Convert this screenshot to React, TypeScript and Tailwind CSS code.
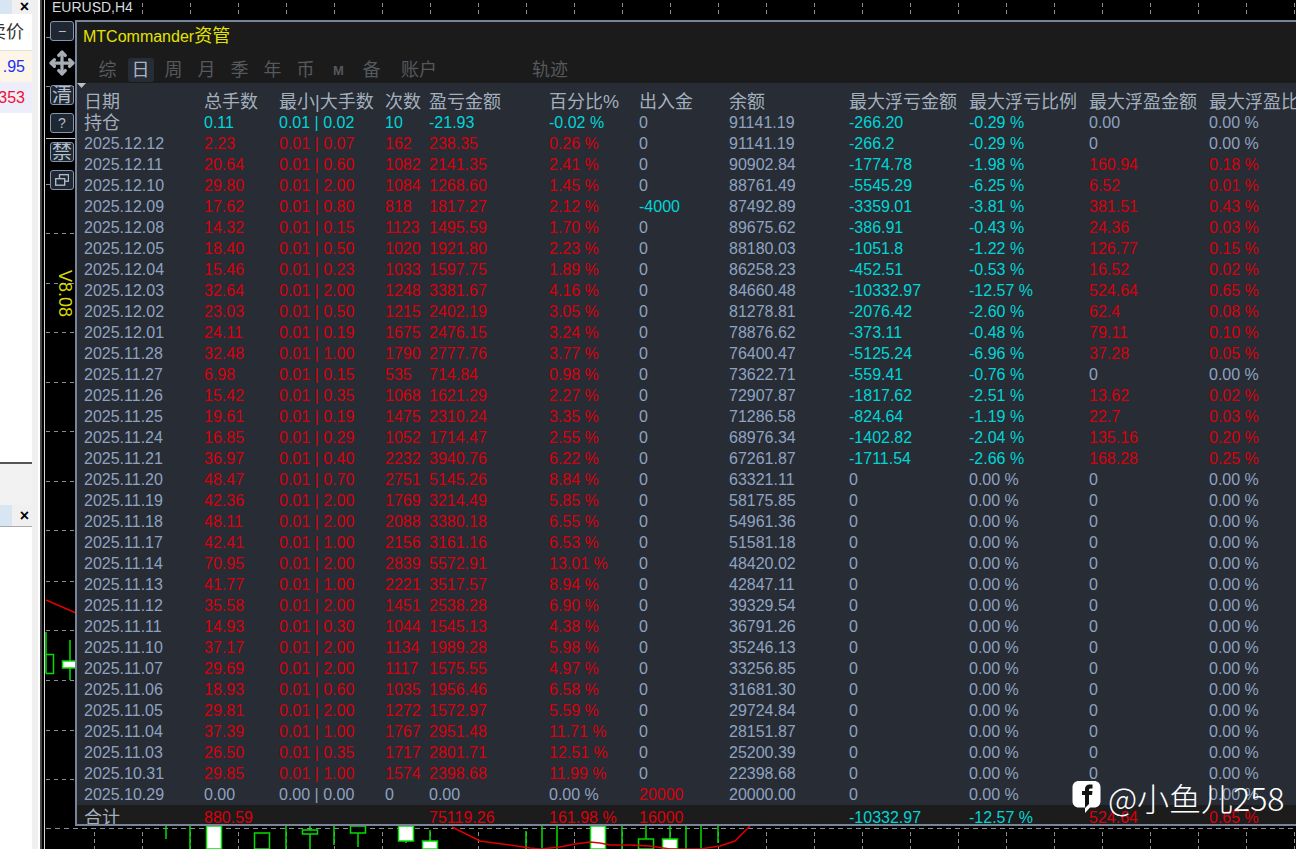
import { Move } from 'lucide-react';

const HEADERS = ['日期', '总手数', '最小|大手数', '次数', '盈亏金额', '百分比%', '出入金', '余额', '最大浮亏金额', '最大浮亏比例', '最大浮盈金额', '最大浮盈比例'];

const ROWS = [
  '2025.12.12,2.23,0.01 | 0.07,162,238.35,0.26 %,0,91141.19,-266.2,-0.29 %,0,0.00 %',
  '2025.12.11,20.64,0.01 | 0.60,1082,2141.35,2.41 %,0,90902.84,-1774.78,-1.98 %,160.94,0.18 %',
  '2025.12.10,29.80,0.01 | 2.00,1084,1268.60,1.45 %,0,88761.49,-5545.29,-6.25 %,6.52,0.01 %',
  '2025.12.09,17.62,0.01 | 0.80,818,1817.27,2.12 %,-4000,87492.89,-3359.01,-3.81 %,381.51,0.43 %',
  '2025.12.08,14.32,0.01 | 0.15,1123,1495.59,1.70 %,0,89675.62,-386.91,-0.43 %,24.36,0.03 %',
  '2025.12.05,18.40,0.01 | 0.50,1020,1921.80,2.23 %,0,88180.03,-1051.8,-1.22 %,126.77,0.15 %',
  '2025.12.04,15.46,0.01 | 0.23,1033,1597.75,1.89 %,0,86258.23,-452.51,-0.53 %,16.52,0.02 %',
  '2025.12.03,32.64,0.01 | 2.00,1248,3381.67,4.16 %,0,84660.48,-10332.97,-12.57 %,524.64,0.65 %',
  '2025.12.02,23.03,0.01 | 0.50,1215,2402.19,3.05 %,0,81278.81,-2076.42,-2.60 %,62.4,0.08 %',
  '2025.12.01,24.11,0.01 | 0.19,1675,2476.15,3.24 %,0,78876.62,-373.11,-0.48 %,79.11,0.10 %',
  '2025.11.28,32.48,0.01 | 1.00,1790,2777.76,3.77 %,0,76400.47,-5125.24,-6.96 %,37.28,0.05 %',
  '2025.11.27,6.98,0.01 | 0.15,535,714.84,0.98 %,0,73622.71,-559.41,-0.76 %,0,0.00 %',
  '2025.11.26,15.42,0.01 | 0.35,1068,1621.29,2.27 %,0,72907.87,-1817.62,-2.51 %,13.62,0.02 %',
  '2025.11.25,19.61,0.01 | 0.19,1475,2310.24,3.35 %,0,71286.58,-824.64,-1.19 %,22.7,0.03 %',
  '2025.11.24,16.85,0.01 | 0.29,1052,1714.47,2.55 %,0,68976.34,-1402.82,-2.04 %,135.16,0.20 %',
  '2025.11.21,36.97,0.01 | 0.40,2232,3940.76,6.22 %,0,67261.87,-1711.54,-2.66 %,168.28,0.25 %',
  '2025.11.20,48.47,0.01 | 0.70,2751,5145.26,8.84 %,0,63321.11,0,0.00 %,0,0.00 %',
  '2025.11.19,42.36,0.01 | 2.00,1769,3214.49,5.85 %,0,58175.85,0,0.00 %,0,0.00 %',
  '2025.11.18,48.11,0.01 | 2.00,2088,3380.18,6.55 %,0,54961.36,0,0.00 %,0,0.00 %',
  '2025.11.17,42.41,0.01 | 1.00,2156,3161.16,6.53 %,0,51581.18,0,0.00 %,0,0.00 %',
  '2025.11.14,70.95,0.01 | 2.00,2839,5572.91,13.01 %,0,48420.02,0,0.00 %,0,0.00 %',
  '2025.11.13,41.77,0.01 | 1.00,2221,3517.57,8.94 %,0,42847.11,0,0.00 %,0,0.00 %',
  '2025.11.12,35.58,0.01 | 2.00,1451,2538.28,6.90 %,0,39329.54,0,0.00 %,0,0.00 %',
  '2025.11.11,14.93,0.01 | 0.30,1044,1545.13,4.38 %,0,36791.26,0,0.00 %,0,0.00 %',
  '2025.11.10,37.17,0.01 | 2.00,1134,1989.28,5.98 %,0,35246.13,0,0.00 %,0,0.00 %',
  '2025.11.07,29.69,0.01 | 2.00,1117,1575.55,4.97 %,0,33256.85,0,0.00 %,0,0.00 %',
  '2025.11.06,18.93,0.01 | 0.60,1035,1956.46,6.58 %,0,31681.30,0,0.00 %,0,0.00 %',
  '2025.11.05,29.81,0.01 | 2.00,1272,1572.97,5.59 %,0,29724.84,0,0.00 %,0,0.00 %',
  '2025.11.04,37.39,0.01 | 1.00,1767,2951.48,11.71 %,0,28151.87,0,0.00 %,0,0.00 %',
  '2025.11.03,26.50,0.01 | 0.35,1717,2801.71,12.51 %,0,25200.39,0,0.00 %,0,0.00 %',
  '2025.10.31,29.85,0.01 | 1.00,1574,2398.68,11.99 %,0,22398.68,0,0.00 %,0,0.00 %',
  '2025.10.29,0.00,0.00 | 0.00,0,0.00,0.00 %,20000,20000.00,0,0.00 %,0,0.00 %',
].map((r) => r.split(','));

const HOLDING = ['持仓', '0.11', '0.01 | 0.02', '10', '-21.93', '-0.02 %', '0', '91141.19', '-266.20', '-0.29 %', '0.00', '0.00 %'];
const TOTAL = ['合计', '880.59', '', '', '75119.26', '161.98 %', '16000', '', '-10332.97', '-12.57 %', '524.64', '0.65 %'];

const TABS = ['综', '日', '周', '月', '季', '年', '币', 'M', '备'];

const RED = 'text-[#d8000c]';
const CYAN = 'text-[#00d5d5]';
const GRAY = 'text-[#8fa3c0]';

const gridClass = 'grid grid-cols-[120px_75px_106px_44px_120px_90px_90px_120px_120px_120px_120px_120px] items-center whitespace-nowrap pl-[7px]';
const rowClass = `${gridClass} h-[21px]`;

const cellColor = (value: string, col: number) => {
  if (col === 0 || col === 7) return GRAY;
  const n = parseFloat(value);
  if (n === 0) return GRAY;
  return n < 0 ? CYAN : RED;
};

// chart behind the panel: grid, candles and the moving average
const CANDLES = [
  { x: 166, top: 826, bottom: 839 },
  { x: 190, top: 826, bottom: 849 },
  { x: 214, top: 826, bottom: 849, box: [826, 849], fill: true },
  { x: 262, top: 833, bottom: 849, box: [833, 849] },
  { x: 286, top: 826, bottom: 849, box: [833, 833] },
  { x: 310, top: 826, bottom: 849, box: [830, 834] },
  { x: 334, top: 826, bottom: 845, box: [830, 830] },
  { x: 358, top: 826, bottom: 847, box: [826, 833] },
  { x: 406, top: 826, bottom: 843, box: [826, 841], fill: true },
  { x: 430, top: 830, bottom: 849, box: [841, 849], fill: true },
  { x: 526, top: 831, bottom: 849 },
  { x: 542, top: 826, bottom: 849 },
  { x: 557, top: 826, bottom: 849 },
  { x: 598, top: 826, bottom: 849, box: [826, 849], fill: true },
  { x: 622, top: 826, bottom: 849 },
  { x: 646, top: 826, bottom: 849, box: [839, 849] },
  { x: 670, top: 826, bottom: 849, box: [839, 849], fill: true },
  { x: 686, top: 826, bottom: 849 },
  { x: 701, top: 826, bottom: 849 },
  { x: 718, top: 826, bottom: 843 },
  { x: 70, top: 640, bottom: 680, box: [661, 668], fill: true },
];

function ChartCanvas() {
  const ticks = Array.from({ length: 26 }, (_, i) => 94 + i * 48);
  const levels = [37, 86, 184, 233, 283, 332, 382, 431, 481, 530, 581, 630, 680, 730, 779];
  return (
    <svg className="absolute left-0 top-0" width="1296" height="849" viewBox="0 0 1296 849" fill="none">
      {ticks.map((x) => (
        <g key={x} stroke="#8a8f96" strokeWidth="1" strokeDasharray="4 3">
          <path d={`M${x + 0.5} 3V16`} />
          <path d={`M${x + 0.5} 832V849`} />
        </g>
      ))}
      {levels.map((y) => (
        <path key={y} d={`M46 ${y + 0.5}H76`} stroke="#8a8f96" strokeDasharray="4 4" />
      ))}
      <path d="M46 828.5H1296" stroke="#8a8f96" strokeDasharray="5 4" />
      <path d="M46 138.5H76" stroke="#c8ccd2" />
      {CANDLES.map((c) => (
        <g key={c.x} stroke="#00e000" strokeWidth="1.5">
          <path d={`M${c.x} ${c.top}V${c.bottom}`} />
          {c.box && (
            <rect x={c.x - 7.5} y={c.box[0]} width="15" height={c.box[1] - c.box[0]} fill={c.fill ? '#ffffff' : '#000000'} />
          )}
        </g>
      ))}
      <path d="M46 632V673.500M46 654.500H53.500V673.500H46" stroke="#00e000" strokeWidth="1.500" />
      <path d="M46 600L76 613" stroke="#e00000" strokeWidth="1.5" />
      <path
        d="M452 827L480 841L495 843L510 845L530 848L540 849L560 847L575 844L590 842L600 843L610 845L630 845L650 846L670 849L700 849L720 846L735 841L750 826"
        stroke="#e00000"
        strokeWidth="1.5"
      />
    </svg>
  );
}

function SideButton({ children, className = '' }: { children: React.ReactNode; className?: string }) {
  return (
    <div className={`flex h-[20px] w-[24px] items-center justify-center overflow-hidden rounded-[3px] border border-[#8496ad] bg-[#1f2733] text-[#b4bfcc] ${className}`}>
      {children}
    </div>
  );
}

function SideTools() {
  return (
    <div className="absolute left-[50px] top-[21px] flex w-[24px] flex-col items-center">
      <SideButton className="text-[14px] leading-none">−</SideButton>
      <Move className="mb-[9px] mt-[9px] h-[26px] w-[26px] text-[#a8aeb5]" strokeWidth={3} />
      <SideButton className="text-[20px] leading-none">清</SideButton>
      <SideButton className="mt-[8px] text-[14px] leading-none">?</SideButton>
      <SideButton className="mt-[9px] text-[20px] leading-none">禁</SideButton>
      <SideButton className="mt-[8px]">
        <svg width="14" height="12" viewBox="0 0 14 12" fill="none" stroke="#b4bfcc" strokeWidth="1.3">
          <rect x="4.5" y="0.7" width="9" height="6.5" />
          <rect x="0.7" y="4.7" width="9" height="6.5" fill="#1f2733" />
        </svg>
      </SideButton>
      <div className="ml-[6px] mt-[80px] whitespace-nowrap text-[18px] leading-none text-[#d8d800] [writing-mode:vertical-rl]">V8.08</div>
    </div>
  );
}

function LeftDock() {
  return (
    <aside className="flex w-[38px] shrink-0 flex-col overflow-hidden border-r-[6px] border-[#f0f0f0] bg-white text-[16px]">
      <div className="flex h-[14px] items-center justify-end bg-[#f0f0f0] pr-[3px] text-[16px] font-bold leading-none">
        <span className="mr-auto h-full w-[12px] bg-[#d8e6f4]" />×
      </div>
      <div className="flex h-[37px] items-center justify-end border-b border-[#e0e0e0] pr-[8px] text-[18px] text-[#333]">
        <span className="whitespace-nowrap">卖价</span>
      </div>
      <div className="flex h-[31px] items-center justify-end bg-[#fdf5e8] pr-[7px] text-[#2030f0]">.95</div>
      <div className="flex h-[31px] items-center justify-end bg-[#eeeefa] pr-[7px] text-[#f01030]">353</div>
      <div className="h-[351px] border-b-2 border-[#555]" />
      <div className="h-[41px] bg-[#f2f2f2]" />
      <div className="flex h-[22px] items-center justify-end border-b border-[#aaa] bg-[#f0f0f0] pr-[3px]">
        <span className="mr-auto h-full w-[12px] bg-[#d8e6f4]" />
        <span className="text-[16px] font-bold leading-none">×</span>
      </div>
      <div className="flex-1" />
    </aside>
  );
}

function Panel() {
  return (
    <div className="absolute left-[75px] top-[20px] flex h-[806px] w-[1221px] flex-col overflow-hidden border-y-2 border-l-2 border-[#76859a] bg-[#272c35] text-[16px] leading-none">
      <header className="h-[61px] shrink-0 bg-[#1b1b1b] pl-[6px]">
        <div className="pt-[5px] text-[#e4e400]">
          MTCommander<span className="text-[18px]">资管</span>
        </div>
        <nav className="mt-[13px] flex h-[24px] items-center pl-[8px] text-[18px] text-[#55595e]">
          {TABS.map((t) => (
            <span
              key={t}
              className={`mx-[3.5px] flex h-[24px] w-[26px] items-center justify-center ${t === 'M' ? 'text-[13px] font-bold' : ''} ${t === '日' ? 'rounded-[3px] bg-[#272d36] text-[#aab4c0]' : ''}`}
            >
              {t}
            </span>
          ))}
          <span className="ml-[13px]">账户</span>
          <span className="ml-[95px]">轨迹</span>
        </nav>
      </header>
      <svg className="absolute left-0 top-[61px]" width="10" height="6" viewBox="0 0 10 6">
        <path d="M0 0H9L4.5 5Z" fill="#b9bfc6" />
      </svg>
      <div className="shrink-0 pt-[8px]">
        <div className={`${rowClass} text-[18px] text-[#a3afbd]`}>
          {HEADERS.map((h) => (
            <span key={h}>{h}</span>
          ))}
        </div>
        <div className={rowClass}>
          {HOLDING.map((v, i) => (
            <span key={i} className={i === 0 ? 'text-[18px] text-[#a3afbd]' : i < 4 ? CYAN : cellColor(v, i)}>
              {v}
            </span>
          ))}
        </div>
        {ROWS.map((row) => (
          <div key={row[0]} className={rowClass}>
            {row.map((v, i) => (
              <span key={i} className={cellColor(v, i)}>
                {v}
              </span>
            ))}
          </div>
        ))}
      </div>
      <div className={`${gridClass} h-[19px] shrink-0 bg-[#1c1c1c] pt-[4px]`}>
        {TOTAL.map((v, i) => (
          <span key={i} className={i === 0 ? 'text-[18px] text-[#a3afbd]' : cellColor(v, i)}>
            {v}
          </span>
        ))}
      </div>
    </div>
  );
}

function Watermark() {
  return (
    <div className="absolute left-[1072px] top-[780px] flex items-center gap-[7px] font-['Noto_Sans_CJK_SC',sans-serif] text-[32px] font-light leading-none text-white">
      <svg width="29" height="34" viewBox="0 0 29 34">
        <path
          d="M7 1H22C26 1 28.500 3.500 28.500 7.500V21C28.500 25 26 27.500 22 27.500H18L13 33V27.500H7C3 27.500 .5 25 .5 21V7.500C.5 3.500 3 1 7 1Z"
          fill="#ffffff"
        />
        <path d="M13 28V15H10V11H13V9C13 6 15 4.500 17.500 4.500H20.500V8.500H18.500C17.500 8.500 17 9 17 10V11H20.500L20 15H17V24Z" fill="#111111" />
      </svg>
      <span>@小鱼儿258</span>
    </div>
  );
}

export default function App() {
  return (
    <div className="relative flex h-[849px] w-[1296px] overflow-hidden bg-black font-['Liberation_Sans','Noto_Sans_CJK_SC',sans-serif]">
      <LeftDock />
      <div className="h-full w-[2px] shrink-0 bg-white" />
      <div className="h-full w-[2px] shrink-0 bg-[#444]" />
      <div className="h-full w-[2px] shrink-0 bg-black" />
      <div className="h-full w-px shrink-0 bg-[#d8d8d8]" />
      <ChartCanvas />
      <div className="absolute left-[52px] top-0 text-[14px] leading-[14px] text-[#d8dadd]">EURUSD,H4</div>
      <SideTools />
      <Panel />
      <Watermark />
    </div>
  );
}
